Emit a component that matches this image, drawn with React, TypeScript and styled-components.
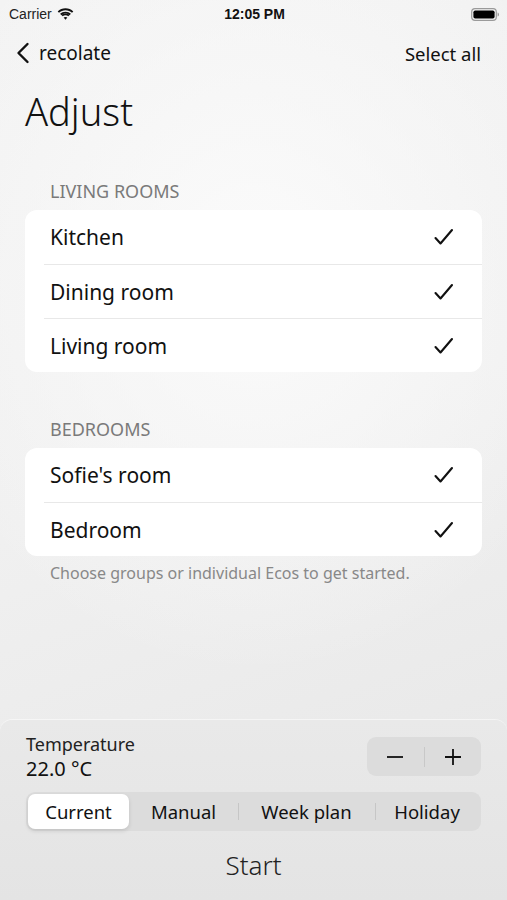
import React, { useState } from 'react';
import styled, { createGlobalStyle } from 'styled-components';

const GlobalStyle = createGlobalStyle`
  html, body {
    margin: 0;
    padding: 0;
    height: 100%;
  }
  body {
    font-family: 'Noto Sans', 'Open Sans', sans-serif;
    color: #111;
    background: #eeeeee;
  }
  #root {
    height: 100%;
  }
`;

// Page shell
const Screen = styled.div`
  width: 507px;
  height: 900px;
  display: flex;
  flex-direction: column;
  overflow: hidden;
  background:
    radial-gradient(ellipse 70% 45% at 50% 30%, #fbfbfb 0%, rgba(251, 251, 251, 0) 100%),
    linear-gradient(160deg, #f3f3f3 0%, #f0f0f0 50%, #e6e6e6 100%);
`;

const StatusBar = styled.div`
  height: 28px;
  padding: 0 7px 0 9px;
  display: grid;
  grid-template-columns: 1fr auto 1fr;
  align-items: center;
  font-family: 'Liberation Sans', 'Noto Sans', sans-serif;
  font-size: 14px;
`;

const Carrier = styled.div`
  display: flex;
  align-items: center;
  gap: 5px;
  color: #222;
`;

const Clock = styled.div`
  font-weight: 700;
  font-size: 14px;
  color: #111;
`;

const BatteryWrap = styled.div`
  justify-self: end;
  display: flex;
  align-items: center;
`;

const NavBar = styled.div`
  height: 50px;
  padding: 0 26px 0 16px;
  display: flex;
  align-items: center;
  justify-content: space-between;
`;

const BackButton = styled.div`
  display: flex;
  align-items: center;
  gap: 9px;
  font-size: 19px;
  color: #111;
`;

const NavAction = styled.div`
  font-size: 18.5px;
  color: #111;
`;

const Title = styled.h1`
  margin: 0;
  padding: 3px 25px 0;
  font-size: 38px;
  font-weight: 300;
  line-height: 60px;
`;

const Content = styled.div`
  flex: 1;
  padding: 0 25px;
`;

const SectionHeader = styled.div<{ $top: number }>`
  margin-top: ${({ $top }) => $top}px;
  padding: 0 25px;
  height: 35px;
  display: flex;
  align-items: center;
  font-size: 18px;
  color: #7a7a7a;
  text-transform: uppercase;
`;

const Card = styled.div`
  margin-top: 2px;
  background: #ffffff;
  border-radius: 12px;
  overflow: hidden;
`;

const Row = styled.div`
  box-sizing: border-box;
  height: 54px;
  padding: 0 28px 0 25px;
  display: flex;
  align-items: center;
  justify-content: space-between;
  font-size: 21px;
  color: #111;

  & + & {
    border-top: 1px solid #e8e8e8;
    margin-left: 19px;
    padding-left: 6px;
  }
`;

const FooterNote = styled.div`
  padding: 6px 25px 0;
  font-size: 16px;
  color: #888;
`;

const BottomPanel = styled.div`
  height: 180px;
  box-sizing: border-box;
  padding: 13px 26px 0;
  border-radius: 12px 12px 0 0;
  background: linear-gradient(180deg, #e9e9e9 0%, #e4e4e4 100%);
  box-shadow: 0 -1px 0 rgba(255, 255, 255, 0.5);
  display: flex;
  flex-direction: column;
`;

const TempRow = styled.div`
  display: flex;
  align-items: flex-start;
  justify-content: space-between;
`;

const TempLabel = styled.div`
  font-size: 18px;
  line-height: 23px;
  color: #222;
`;

const TempValue = styled.div`
  font-size: 20px;
  line-height: 25px;
  color: #111;
`;

const Stepper = styled.div`
  margin-top: 4px;
  width: 114px;
  height: 39px;
  border-radius: 9px;
  background: #dcdcdc;
  display: flex;
  align-items: center;
`;

const StepButton = styled.div`
  flex: 1;
  height: 100%;
  display: flex;
  align-items: center;
  justify-content: center;
`;

const StepDivider = styled.div`
  width: 1px;
  height: 20px;
  background: #c8c8c8;
`;

const Segmented = styled.div`
  margin-top: 11px;
  height: 39px;
  box-sizing: border-box;
  padding: 2px;
  border-radius: 9px;
  background: #dcdcdc;
  display: flex;
  align-items: stretch;
`;

const Segment = styled.div<{ $active: boolean; $divider: boolean; $grow: number }>`
  position: relative;
  flex: ${({ $grow }) => $grow} 1 0;
  display: flex;
  align-items: center;
  justify-content: center;
  font-size: 18.5px;
  color: #111;
  border-radius: 7px;
  background: ${({ $active }) => ($active ? '#ffffff' : 'transparent')};
  box-shadow: ${({ $active }) => ($active ? '0 2px 4px rgba(0,0,0,0.12)' : 'none')};

  &::before {
    content: '';
    display: ${({ $divider }) => ($divider ? 'block' : 'none')};
    position: absolute;
    left: 0;
    top: 9px;
    bottom: 9px;
    width: 1px;
    background: #c6c6c6;
  }
`;

const StartButton = styled.div`
  margin-top: 16px;
  text-align: center;
  font-size: 26px;
  font-weight: 300;
  color: #222;
`;

const Check = () => (
  <svg width="21" height="18" viewBox="0 0 21 18" fill="none">
    <path d="M2.5 10 L7.5 15.5 L19 2" stroke="#111" strokeWidth="2.1" strokeLinecap="round" strokeLinejoin="round" />
  </svg>
);

const Wifi = () => (
  <svg width="17" height="12" viewBox="0 0 17 12">
    <path d="M8.5 2.2c2.5 0 4.8 1 6.5 2.6l1.3-1.4C14.2 1.4 11.5.2 8.5.2S2.8 1.4.7 3.4L2 4.8C3.7 3.2 6 2.2 8.5 2.2z" fill="#111" />
    <path d="M8.5 5.6c1.6 0 3 .6 4.1 1.6l1.3-1.4C12.5 4.5 10.6 3.7 8.5 3.7S4.5 4.5 3.1 5.8l1.3 1.4c1.1-1 2.5-1.6 4.1-1.6z" fill="#111" />
    <path d="M8.5 8.9c.7 0 1.4.3 1.9.7L8.5 11.7 6.6 9.6c.5-.4 1.2-.7 1.9-.7z" fill="#111" />
    <path d="M8.5 7.2c1.1 0 2 .4 2.8 1L12.5 7c-1-1-2.5-1.5-4-1.5S5.5 6 4.5 7l1.2 1.2c.8-.6 1.7-1 2.8-1z" fill="#111" />
  </svg>
);

const Battery = () => (
  <svg width="29" height="13" viewBox="0 0 29 13">
    <rect x="0.7" y="0.7" width="24.6" height="11.6" rx="3.3" fill="none" stroke="#9a9a9a" strokeWidth="1.2" />
    <rect x="2.4" y="2.4" width="21.2" height="8.2" rx="1.8" fill="#000" />
    <path d="M26.6 4.4c.9.3 1.4 1.1 1.4 2.1s-.5 1.8-1.4 2.1z" fill="#9a9a9a" />
  </svg>
);

const Chevron = () => (
  <svg width="14" height="22" viewBox="0 0 14 22" fill="none">
    <path d="M11.5 2 L2.5 11 L11.5 20" stroke="#111" strokeWidth="2.4" strokeLinecap="round" strokeLinejoin="round" />
  </svg>
);

const Minus = () => (
  <svg width="18" height="18" viewBox="0 0 18 18">
    <path d="M1 9 H17" stroke="#111" strokeWidth="1.8" />
  </svg>
);

const Plus = () => (
  <svg width="18" height="18" viewBox="0 0 18 18">
    <path d="M1 9 H17 M9 1 V17" stroke="#111" strokeWidth="1.8" />
  </svg>
);

const groups = [
  { name: 'Living rooms', top: 32, rooms: ['Kitchen', 'Dining room', 'Living room'] },
  { name: 'Bedrooms', top: 39, rooms: ["Sofie's room", 'Bedroom'] },
];

const modes = [
  { label: 'Current', grow: 101 },
  { label: 'Manual', grow: 109 },
  { label: 'Week plan', grow: 137 },
  { label: 'Holiday', grow: 104 },
];

const App: React.FC = () => {
  const [mode, setMode] = useState(0);
  const [temp, setTemp] = useState(22);

  return (
    <>
      <GlobalStyle />
      <Screen>
        <StatusBar>
          <Carrier>
            Carrier <Wifi />
          </Carrier>
          <Clock>12:05 PM</Clock>
          <BatteryWrap>
            <Battery />
          </BatteryWrap>
        </StatusBar>

        <NavBar>
          <BackButton>
            <Chevron />
            recolate
          </BackButton>
          <NavAction>Select all</NavAction>
        </NavBar>

        <Title>Adjust</Title>

        <Content>
          {groups.map(group => (
            <React.Fragment key={group.name}>
              <SectionHeader $top={group.top}>{group.name}</SectionHeader>
              <Card>
                {group.rooms.map(room => (
                  <Row key={room}>
                    {room}
                    <Check />
                  </Row>
                ))}
              </Card>
            </React.Fragment>
          ))}
          <FooterNote>Choose groups or individual Ecos to get started.</FooterNote>
        </Content>

        <BottomPanel>
          <TempRow>
            <div>
              <TempLabel>Temperature</TempLabel>
              <TempValue>{temp.toFixed(1)} °C</TempValue>
            </div>
            <Stepper>
              <StepButton onClick={() => setTemp(t => t - 0.5)}>
                <Minus />
              </StepButton>
              <StepDivider />
              <StepButton onClick={() => setTemp(t => t + 0.5)}>
                <Plus />
              </StepButton>
            </Stepper>
          </TempRow>

          <Segmented>
            {modes.map((m, i) => (
              <Segment
                key={m.label}
                $grow={m.grow}
                $active={i === mode}
                $divider={i > 0 && i !== mode && i - 1 !== mode}
                onClick={() => setMode(i)}
              >
                {m.label}
              </Segment>
            ))}
          </Segmented>

          <StartButton>Start</StartButton>
        </BottomPanel>
      </Screen>
    </>
  );
};

export default App;
